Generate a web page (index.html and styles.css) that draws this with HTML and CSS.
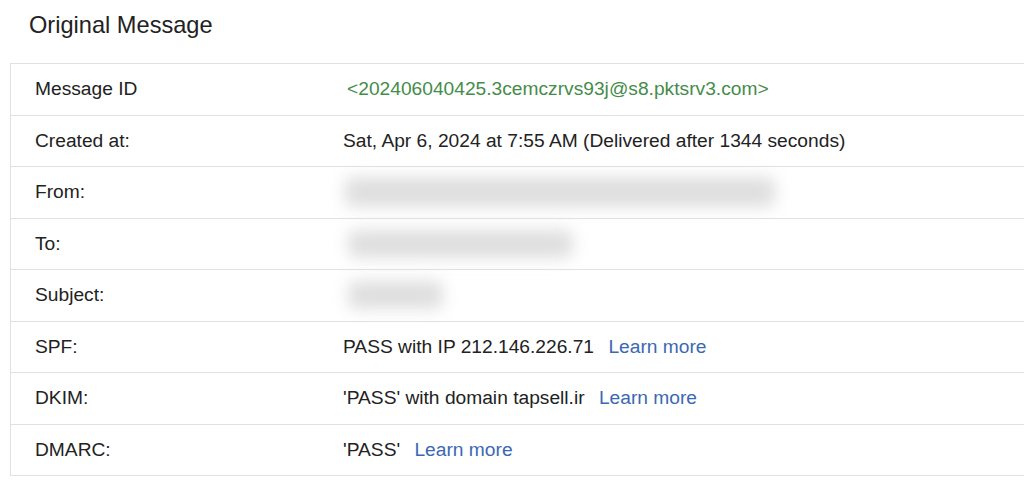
FILE: index.html
```html
<!DOCTYPE html>
<html>
<head>
<meta charset="utf-8">
<link rel="stylesheet" href="styles.css">
</head>
<body>
<div class="page">
  <h1 class="title">Original Message</h1>
  <div class="table">
    <div class="row"><div class="label">Message ID</div><div class="value id">&lt;202406040425.3cemczrvs93j@s8.pktsrv3.com&gt;</div></div>
    <div class="row"><div class="label">Created at:</div><div class="value">Sat, Apr 6, 2024 at 7:55 AM (Delivered after 1344 seconds)</div></div>
    <div class="row"><div class="label">From:</div><div class="value"><span class="blur blur-from"></span></div></div>
    <div class="row"><div class="label">To:</div><div class="value"><span class="blur blur-to"></span></div></div>
    <div class="row"><div class="label">Subject:</div><div class="value"><span class="blur blur-subj"></span></div></div>
    <div class="row"><div class="label">SPF:</div><div class="value">PASS with IP 212.146.226.71 <a class="link" href="#">Learn more</a></div></div>
    <div class="row"><div class="label">DKIM:</div><div class="value">'PASS' with domain tapsell.ir <a class="link" href="#">Learn more</a></div></div>
    <div class="row"><div class="label">DMARC:</div><div class="value">'PASS' <a class="link" href="#">Learn more</a></div></div>
  </div>
</div>
</body>
</html>
```
FILE: styles.css
```css
html, body {
  margin: 0;
  padding: 0;
  background: #fff;
}
body {
  font-family: "Liberation Sans", Arial, sans-serif;
  color: #222;
  overflow: hidden;
}
.title {
  margin: 0;
  padding: 12px 0 0 29px;
  height: 51px;
  box-sizing: border-box;
  font-size: 23.6px;
  font-weight: normal;
  color: #222;
  line-height: 27px;
}
.table {
  margin: 12px -30px 0 10px;
  border: 1px solid #e1e1e1;
}
.row {
  display: flex;
  align-items: center;
  height: 50.5px;
  border-top: 1px solid #e1e1e1;
  font-size: 19.2px;
}
.row:first-child {
  border-top: none;
}
.label {
  width: 308px;
  padding-left: 24px;
  flex: none;
}
.value {
  flex: 1;
  display: flex;
  align-items: center;
  white-space: pre;
}
.id {
  color: #458c4a;
  padding-left: 4px;
}
.link {
  color: #3b68b4;
  text-decoration: none;
  margin-left: 9px;
}
.blur {
  display: block;
  background: #d6d6d6;
  filter: blur(8px);
  opacity: 0.8;
  border-radius: 8px;
}
.blur-from {
  width: 430px;
  height: 30px;
  margin-left: 2px;
}
.blur-to {
  width: 225px;
  height: 28px;
  margin-left: 5px;
}
.blur-subj {
  width: 95px;
  height: 28px;
  margin-left: 5px;
}
```
